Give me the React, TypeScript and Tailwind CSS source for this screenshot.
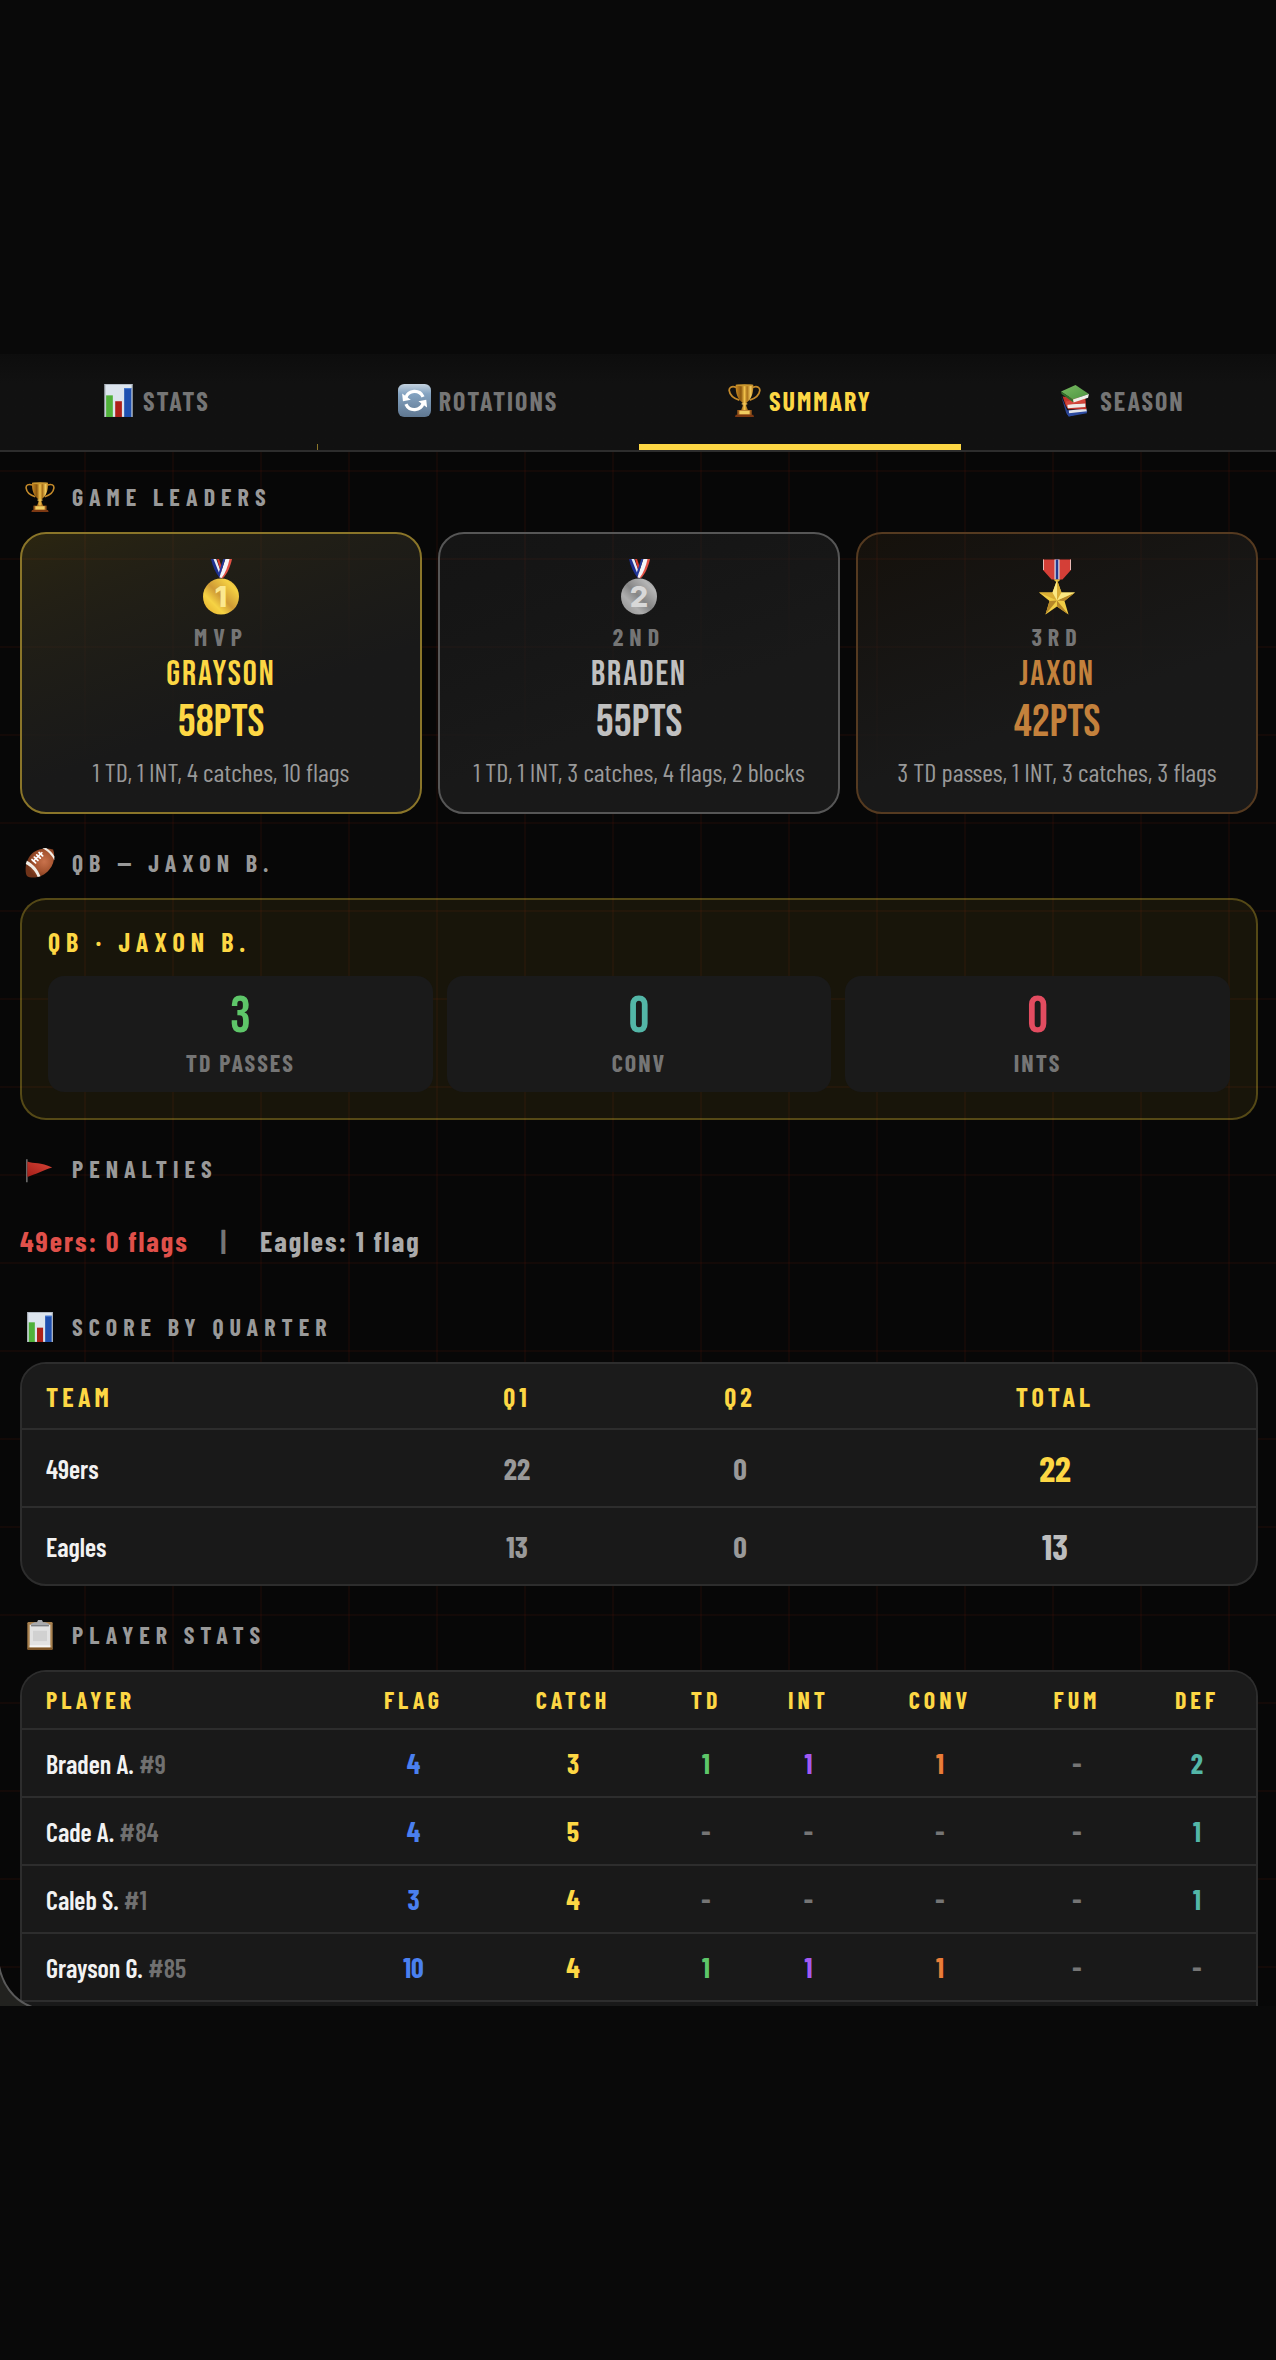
import clsx from "clsx";
import { ReactNode, useState } from "react";

type IconProps = { className?: string };

const SvgDefs = () => (
  <svg className="absolute size-0" aria-hidden="true">
    <defs>
      <linearGradient id="gold" x1="0" x2="1" y1="0" y2="0">
        <stop offset="0" stopColor="#c98a22" />
        <stop offset="0.3" stopColor="#8a560f" />
        <stop offset="0.5" stopColor="#f0c04a" />
        <stop offset="0.65" stopColor="#a8701a" />
        <stop offset="0.85" stopColor="#f3cb5c" />
        <stop offset="1" stopColor="#b87a1c" />
      </linearGradient>
      <linearGradient id="steel" x1="0" x2="0" y1="0" y2="1">
        <stop offset="0" stopColor="#c3d2df" />
        <stop offset="0.3" stopColor="#84a3c1" />
        <stop offset="1" stopColor="#5f7791" />
      </linearGradient>
      <linearGradient id="goldDisc" x1="0" x2="1" y1="1" y2="0">
        <stop offset="0" stopColor="#e0a528" />
        <stop offset="0.3" stopColor="#f6d344" />
        <stop offset="0.5" stopColor="#cf9a35" />
        <stop offset="0.8" stopColor="#f5d143" />
        <stop offset="1" stopColor="#c88f2c" />
      </linearGradient>
      <linearGradient id="silverDisc" x1="0" x2="1" y1="1" y2="0">
        <stop offset="0" stopColor="#8b8b8b" />
        <stop offset="0.3" stopColor="#adadad" />
        <stop offset="0.5" stopColor="#858585" />
        <stop offset="0.8" stopColor="#b5b5b5" />
        <stop offset="1" stopColor="#7c7c7c" />
      </linearGradient>
      <radialGradient id="leather" cx="0.65" cy="0.45" r="0.6">
        <stop offset="0" stopColor="#c9724c" />
        <stop offset="0.6" stopColor="#a4532f" />
        <stop offset="1" stopColor="#6f3319" />
      </radialGradient>
      <linearGradient id="flagRed" x1="0" x2="1" y1="1" y2="0">
        <stop offset="0" stopColor="#a31e18" />
        <stop offset="1" stopColor="#d84538" />
      </linearGradient>
      <linearGradient id="bookGreen" x1="0" x2="1" y1="0" y2="1">
        <stop offset="0" stopColor="#79ba62" />
        <stop offset="1" stopColor="#4c9440" />
      </linearGradient>
    </defs>
  </svg>
);

const Trophy = ({ className }: IconProps) => (
  <svg viewBox="0 0 32 32" className={className} aria-hidden="true">
    <path d="M8 3.2C3.500 1.800 .8 3.200 1.200 6.500c.5 4.300 4.300 7.500 9.800 9.200M24 3.200c4.500-1.400 7.200 0 6.800 3.300-.5 4.300-4.300 7.500-9.800 9.200" fill="none" stroke="#c48a2a" strokeWidth="1.700" />
    <path d="M7.500.8h17c.3 8.500-1.800 13.700-6.300 17.200-.8.700-.8 2.300-.2 4l1.400 3.500h-6.800l1.400-3.500c.6-1.700.6-3.300-.2-4C9.300 14.500 7.200 9.300 7.500.8z" fill="url(#gold)" />
    <ellipse cx="16" cy="1.300" rx="8.500" ry="1" fill="#c9962f" />
    <path d="M13.300 19.300h5.400" stroke="#f0c55a" strokeWidth="1.200" />
    <path d="M9 25.200h14v5H9z" fill="#9c5a1c" />
    <path d="M11 25.800h10v3.600H11z" fill="#f1cd62" />
    <path d="M7.500 29.800h17l.7 2.200H6.800z" fill="#7c3812" />
  </svg>
);

const BarChart = ({ className }: IconProps) => (
  <svg viewBox="0 0 32 32" className={className} aria-hidden="true">
    <path d="M2.500 0h27v32h-27z" fill="#dde5ee" />
    <path d="M2.500 0h27v1h-27z" fill="#9fa6ad" />
    <path d="M3 .5h26v31.500H3z" fill="none" stroke="#b3bcc6" />
    <path d="M4 11h6.500v21H4z" fill="#50b13a" />
    <path d="M12.800 16.700h6.500V32h-6.500z" fill="#ae2119" />
    <path d="M21.500 4H28.500v28h-7z" fill="#1f50b0" />
    <path d="M21.500 4h7v1h-7z" fill="#4b7fd6" />
  </svg>
);

const Refresh = ({ className }: IconProps) => (
  <svg viewBox="0 0 32 32" className={className} aria-hidden="true">
    <rect width="32" height="32" rx="6" fill="url(#steel)" />
    <path d="M7.500 13.500A9 9 0 0 1 24.300 12.500M24.500 18.500A9 9 0 0 1 7.700 19.500" fill="none" stroke="#fff" strokeWidth="3.200" />
    <path d="M4 9.200l.8 7.500 7.600-1.500zM28.200 22.800l-.8-7.500-7.600 1.500z" fill="#fff" />
  </svg>
);

const Books = ({ className }: IconProps) => (
  <svg viewBox="0 0 32 32" className={className} aria-hidden="true">
    <path d="M2 11.500l6 14 18-1.500 1.500 3-18 4.500L7 28z" fill="#29418f" />
    <path d="M9.500 25.800l17-2 .5 3.400-17 2.800z" fill="#e3e5ea" />
    <path d="M7.500 28.500L27 26.500v1.800L9.500 31.500z" fill="#2c4a9f" />
    <path d="M3.500 12l3 8.800L9 24.500h17.500l-1-12-10 1z" fill="#c2352c" />
    <path d="M8 19.800l17.500-.8v3.300L8.500 23.500z" fill="#efe9e6" />
    <path d="M6.500 17L25 13.500l.5 4.500L7 20z" fill="#d4473c" />
    <path d="M2 7.200L16 1l13 8.800L13.500 15z" fill="url(#bookGreen)" />
    <path d="M13.500 15L29 9.800l-.8 3.600L14 18z" fill="#eef0ea" />
    <path d="M2 7.200L13.500 15l.5 3L2.500 9.800z" fill="#33702c" />
  </svg>
);

const Football = ({ className }: IconProps) => (
  <svg viewBox="0 0 32 32" className={className} aria-hidden="true">
    <path d="M1 27C-.5 18 3 9 9.500 4.300 16 -.2 24 -.3 30 1.500c2.200 6 1.500 15-4 21.500-5.500 6.800-13 9.500-21 8.300C2.500 31 1.300 29.500 1 27z" fill="url(#leather)" />
    <path d="M.8 17c5.200 2.500 10.200 7.500 12.700 13.800l3-.6C14 23 8.500 16.500 2 13.500z" fill="#f1ede6" />
    <path d="M18.500.2C24 3 28.800 7.500 31.200 13l.2-4C29.500 5.500 26.500 2.500 22.500.1z" fill="#f1ede6" />
    <path d="M8.500 14.500L18.500 4.500" stroke="#fff" strokeWidth="1.600" />
    <path d="M7.500 12.300l3.800 3.500M10 9.800l3.800 3.500M12.500 7.300l3.800 3.500M15 4.800l3.800 3.500" stroke="#fff" strokeWidth="1.900" strokeLinecap="round" />
  </svg>
);

const Flag = ({ className }: IconProps) => (
  <svg viewBox="0 0 32 32" className={className} aria-hidden="true">
    <path d="M2 5.500V30" stroke="#8b8b8b" strokeWidth="1.300" />
    <path d="M2.500 8c7 3 14-.2 26.500 6.500C19 17.500 12.500 21.500 2.500 24.500z" fill="url(#flagRed)" />
  </svg>
);

const Clipboard = ({ className }: IconProps) => (
  <svg viewBox="0 0 32 32" className={className} aria-hidden="true">
    <rect x="2.500" y="2" width="27" height="30" rx="1.500" fill="#a8814f" />
    <path d="M2.800 29.500h26.400V32H2.800z" fill="#7c5427" />
    <path d="M5 5h22v24H5z" fill="#e2e2e2" />
    <path d="M5 27h22v2H5z" fill="#f6f6f6" />
    <path d="M8.500 11.500h15v11h-15z" fill="#d1d1d1" />
    <path d="M6.500 6.500V4l4-1.500H13a3 3 0 0 1 6 0h2.500l4 1.500v2.500z" fill="#a7a9ad" />
    <path d="M6.500 5.500h19v1.300h-19z" fill="#77797e" />
  </svg>
);

const Medal = ({ place }: { place: 1 | 2 }) => (
  <svg viewBox="0 0 36 56" className="h-14 w-9" aria-hidden="true">
    <path d="M8 0h5l7 18-3 1.500C12.500 14 9.500 7 8 0z" fill="#1d2f8f" />
    <path d="M10.500 0h2.700l5.800 16-1.300 2z" fill="#e9ecf5" />
    <path d="M14 0h2l3.500 10L18 14z" fill="#d8392f" />
    <path d="M29 0h-5.500l-7 18 3 1.500C24.500 15 27.500 7 29 0z" fill="#e25145" />
    <path d="M26.500 0h-4.200l-5.800 18.300 2 .7C22.500 14 25 7 26.500 0z" fill="#f4f4f7" />
    <path d="M22.300 0h-2l-5 15 1.200 3z" fill="#22399c" />
    <circle cx="18" cy="37.500" r="18" fill={place === 1 ? "url(#goldDisc)" : "url(#silverDisc)"} />
    <text
      x="18"
      y="48"
      textAnchor="middle"
      className={clsx(
        "font-['Inter',sans-serif] text-[29px] font-extrabold",
        place === 1 ? "fill-[#fbe88f]" : "fill-[#d8d8d8]"
      )}
    >
      {place}
    </text>
  </svg>
);

const StarMedal = () => (
  <svg viewBox="0 0 36 56" className="h-14 w-9" aria-hidden="true">
    <path d="M4 .5h28V11l-8.500 9.500h-11L4 11z" fill="#d43f37" />
    <path d="M4.500 .5V11M31.500 .5V11" stroke="#e9b9b5" />
    <path d="M15.500.5h5v20h-5z" fill="#dfe3ee" />
    <path d="M16.700.5h2.600v20h-2.600z" fill="#23388c" />
    <path d="M14.500 20.500h7l-2 2h-3z" fill="#e2b93a" />
    <path d="M18 21l4.500 12.500H36L25.500 42l4 13.500L18 47.500 6.500 55.500l4-13.500L0 33.500h13.500z" fill="#f0cd45" />
    <path d="M18 41.500L36 33.500 25.500 42zM18 41.500l11.500 14L18 47.500zM18 41.500l-11.500 14 4-13.500z" fill="#b58728" />
    <path d="M18 41.500L0 33.500h13.500zM18 41.500V21l4.500 12.500z" fill="#d9ad35" />
    <path d="M18 41.500V21l-4.500 12.500zM18 41.500l18-8H22.500z" fill="#fbe882" />
  </svg>
);

const tabs = [
  { name: "Stats", Icon: BarChart },
  { name: "Rotations", Icon: Refresh },
  { name: "Summary", Icon: Trophy },
  { name: "Season", Icon: Books },
];

const leaders = [
  {
    rank: "MVP",
    name: "Grayson",
    points: 58,
    detail: "1 TD, 1 INT, 4 catches, 10 flags",
    icon: <Medal place={1} />,
    text: "text-[#fdd744]",
    card: "border-[#8a7529] from-[#ffd93d26]",
  },
  {
    rank: "2ND",
    name: "Braden",
    points: 55,
    detail: "1 TD, 1 INT, 3 catches, 4 flags, 2 blocks",
    icon: <Medal place={2} />,
    text: "text-[#c0c0c0]",
    card: "border-[#565656] from-[#c0c0c014]",
  },
  {
    rank: "3RD",
    name: "Jaxon",
    points: 42,
    detail: "3 TD passes, 1 INT, 3 catches, 3 flags",
    icon: <StarMedal />,
    text: "text-[#c4813c]",
    card: "border-[#553a20] from-[#cd8f3214]",
  },
];

const qbStats = [
  { label: "TD Passes", value: 3, color: "text-[#5ec669]" },
  { label: "Conv", value: 0, color: "text-[#53b6a7]" },
  { label: "Ints", value: 0, color: "text-[#e24c60]" },
];

const scores = [
  { team: "49ers", q1: 22, q2: 0, total: 22, color: "text-[#fdd744]" },
  { team: "Eagles", q1: 13, q2: 0, total: 13, color: "text-[#bdbdbd]" },
];

const statColumns = [
  { name: "Flag", width: "w-[147px]", color: "text-[#4a80f0]" },
  { name: "Catch", width: "w-[172px]", color: "text-[#fdd744]" },
  { name: "TD", width: "w-[94px]", color: "text-[#5ec669]" },
  { name: "Int", width: "w-[111px]", color: "text-[#a259f2]" },
  { name: "Conv", width: "w-[152px]", color: "text-[#ea7d38]" },
  { name: "Fum", width: "w-[122px]", color: "text-[#e24c60]" },
  { name: "Def", width: "w-[118px]", color: "text-[#53b6a7]" },
];

const players = [
  { name: "Braden A.", number: 9, stats: [4, 3, 1, 1, 1, 0, 2] },
  { name: "Cade A.", number: 84, stats: [4, 5, 0, 0, 0, 0, 1] },
  { name: "Caleb S.", number: 1, stats: [3, 4, 0, 0, 0, 0, 1] },
  { name: "Grayson G.", number: 85, stats: [10, 4, 1, 1, 1, 0, 0] },
];

type SectionProps = {
  title: string;
  Icon: (props: IconProps) => ReactNode;
  children: ReactNode;
};

const Section = ({ title, Icon, children }: SectionProps) => (
  <section>
    <h2 className="mb-5 flex h-[30px] items-center gap-4 px-1 text-2xl font-bold uppercase tracking-[6px] text-[#999999]">
      <span className="flex w-8 justify-center">
        <Icon className="size-[30px]" />
      </span>
      {title}
    </h2>
    {children}
  </section>
);

const App = () => {
  const [activeTab, setActiveTab] = useState("Summary");

  return (
    <div className="min-h-screen bg-[#090909] py-[354px] font-['Barlow_Condensed','Roboto_Condensed',sans-serif] text-white">
      <SvgDefs />
      <div className="overflow-hidden border-b-2 border-[#2d2d2d] bg-linear-to-b from-[#0d0d0d] to-[#111111] to-30%">
        <nav className="-mr-[7px] -ml-[5px] grid grid-cols-4">
          {tabs.map(({ name, Icon }, i) => (
            <button
              key={name}
              onClick={() => setActiveTab(name)}
              className={clsx(
                "relative flex h-24 items-center justify-center gap-2 border-b-[6px] pt-0.5 text-[26px] font-bold uppercase tracking-[2px]",
                activeTab === name
                  ? "border-[#fdd744] text-[#fdd744]"
                  : "border-transparent text-[#757575]"
              )}
            >
              <Icon className="size-[33px]" />
              {name}
              {i === 1 && (
                <span className="absolute -bottom-1.5 left-0 h-1.5 w-px bg-[#8a7529]" />
              )}
            </button>
          ))}
        </nav>
      </div>

      <main className="relative flex flex-col gap-[34px] bg-[#070707] bg-[linear-gradient(to_right,#aa200012_2px,transparent_2px),linear-gradient(to_bottom,#aa200012_2px,transparent_2px)] bg-size-[88px_88px] bg-position-[84px_18px] pl-5 pr-[18px] pt-[30px]">
        <Section title="Game Leaders" Icon={Trophy}>
          <div className="grid grid-cols-3 gap-4">
            {leaders.map((leader) => (
              <article
                key={leader.rank}
                className={clsx(
                  "flex flex-col items-center rounded-[26px] border-2 bg-linear-160 to-[#191919] to-60% py-[25px]",
                  leader.card
                )}
              >
                {leader.icon}
                <p className="mt-[7px] text-2xl leading-[30px] font-bold tracking-[6px] text-[#757575]">
                  {leader.rank}
                </p>
                <h3
                  className={clsx(
                    "mt-0.5 font-['Bebas_Neue'] text-[35px] leading-[42px] font-normal tracking-[2px]",
                    leader.text
                  )}
                >
                  {leader.name}
                </h3>
                <p className={clsx("font-['Bebas_Neue'] text-[45px] leading-[54px]", leader.text)}>
                  {leader.points}PTS
                </p>
                <p className="mt-1.5 text-[26px] leading-[31px] text-[#999999]">
                  {leader.detail}
                </p>
              </article>
            ))}
          </div>
        </Section>

        <Section title="QB — Jaxon B." Icon={Football}>
          <div className="rounded-[26px] border-2 border-[#ffd93d44] bg-[#ffd93d12] p-[26px]">
            <h3 className="mb-[18px] text-[26px] leading-8 font-bold uppercase tracking-[6px] text-[#fdd744]">
              QB · Jaxon B.
            </h3>
            <dl className="grid grid-cols-3 gap-3.5">
              {qbStats.map((stat) => (
                <div
                  key={stat.label}
                  className="flex flex-col-reverse items-center gap-1 rounded-2xl bg-[#1a1a1a] py-3.5"
                >
                  <dt className="text-2xl leading-[30px] font-bold uppercase tracking-[2px] text-[#757575]">
                    {stat.label}
                  </dt>
                  <dd className={clsx("font-['Bebas_Neue'] text-[52px] leading-[54px]", stat.color)}>
                    {stat.value}
                  </dd>
                </div>
              ))}
            </dl>
          </div>
        </Section>

        <Section title="Penalties" Icon={Flag}>
          <p className="flex h-[74px] items-center gap-8 text-[28px] font-bold tracking-[2px]">
            <span className="text-[#e0504a]">49ers: 0 flags</span>
            <span className="text-[#757575]">|</span>
            <span className="text-[#aaaaaa]">Eagles: 1 flag</span>
          </p>
        </Section>

        <Section title="Score by Quarter" Icon={BarChart}>
          <div className="overflow-hidden rounded-[26px] border-2 border-[#2d2d2d] bg-[#191919]">
            <table className="w-full table-fixed text-center">
              <thead className="border-b-2 border-[#2d2d2d] bg-[#1b1b1b] text-[26px] uppercase tracking-[4px] text-[#fdd744]">
                <tr className="h-[65px]">
                  <th className="w-[386px] px-6 text-left">Team</th>
                  <th className="w-[218px]">Q1</th>
                  <th className="w-[228px]">Q2</th>
                  <th className="w-[402px]">Total</th>
                </tr>
              </thead>
              <tbody className="text-[30px] font-bold text-[#999999]">
                {scores.map((score) => (
                  <tr
                    key={score.team}
                    className="h-[78px] border-b-2 border-[#2d2d2d] last:h-[77px] last:border-b-0"
                  >
                    <th className="px-6 text-left text-[26px] font-semibold text-[#f2f2f2]">
                      {score.team}
                    </th>
                    <td>{score.q1}</td>
                    <td>{score.q2}</td>
                    <td className={clsx("text-4xl", score.color)}>{score.total}</td>
                  </tr>
                ))}
              </tbody>
            </table>
          </div>
        </Section>

        <Section title="Player Stats" Icon={Clipboard}>
          <div className="overflow-hidden rounded-t-[26px] border-2 border-b-0 border-[#2d2d2d] bg-[#191919] pb-1">
            <table className="w-full table-fixed text-center">
              <thead className="bg-[#1b1b1b] text-2xl uppercase tracking-[4px] text-[#fdd744]">
                <tr className="h-[57px] border-b-2 border-[#2d2d2d]">
                  <th className="w-[318px] px-6 text-left">Player</th>
                  {statColumns.map((column) => (
                    <th key={column.name} className={column.width}>
                      {column.name}
                    </th>
                  ))}
                </tr>
              </thead>
              <tbody className="text-[28px] font-bold">
                {players.map((player) => (
                  <tr key={player.number} className="h-[68px] border-b-2 border-[#2d2d2d]">
                    <th className="px-6 text-left text-[26px] font-semibold text-[#f2f2f2]">
                      {player.name} <span className="text-[#707070]">#{player.number}</span>
                    </th>
                    {player.stats.map((stat, i) => (
                      <td
                        key={statColumns[i].name}
                        className={stat > 0 ? statColumns[i].color : "text-[#757575]"}
                      >
                        {stat > 0 ? stat : "-"}
                      </td>
                    ))}
                  </tr>
                ))}
              </tbody>
            </table>
          </div>
        </Section>

        {/* rounded edge of the sheet behind */}
        <svg viewBox="0 0 36 44" className="absolute bottom-0 left-0 h-11 w-9" aria-hidden="true">
          <path d="M0 6C3 20 12 38 30 44H0z" fill="#22221f" />
          <path d="M-1 4C2 20 12 38 32 45" fill="none" stroke="#5a5a5a" strokeWidth="2" />
        </svg>
      </main>
    </div>
  );
};

export default App;
